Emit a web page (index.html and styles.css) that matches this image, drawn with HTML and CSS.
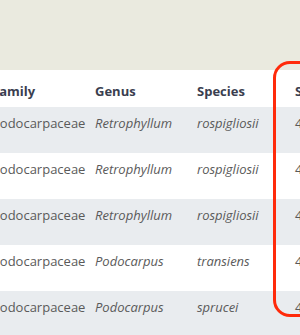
FILE: index.html
```html
<!DOCTYPE html>
<html lang="en">
<head>
<meta charset="utf-8">
<title>Specimen records</title>
<link rel="stylesheet" href="styles.css">
</head>
<body>
  <div class="banner"></div>
  <table class="records">
    <colgroup>
      <col class="c-family">
      <col class="c-genus">
      <col class="c-species">
      <col class="c-count">
    </colgroup>
    <thead>
      <tr>
        <th>Family</th>
        <th>Genus</th>
        <th>Species</th>
        <th>Specimens</th>
      </tr>
    </thead>
    <tbody>
      <tr>
        <td>Podocarpaceae</td>
        <td class="taxon">Retrophyllum</td>
        <td class="taxon">rospigliosii</td>
        <td>4</td>
      </tr>
      <tr>
        <td>Podocarpaceae</td>
        <td class="taxon">Retrophyllum</td>
        <td class="taxon">rospigliosii</td>
        <td>4</td>
      </tr>
      <tr>
        <td>Podocarpaceae</td>
        <td class="taxon">Retrophyllum</td>
        <td class="taxon">rospigliosii</td>
        <td>4</td>
      </tr>
      <tr>
        <td>Podocarpaceae</td>
        <td class="taxon">Podocarpus</td>
        <td class="taxon">transiens</td>
        <td>4</td>
      </tr>
      <tr>
        <td>Podocarpaceae</td>
        <td class="taxon">Podocarpus</td>
        <td class="taxon">sprucei</td>
        <td>4</td>
      </tr>
    </tbody>
  </table>
  <div class="callout"></div>
</body>
</html>
```

FILE: styles.css
```css
html, body {
  margin: 0;
  padding: 0;
  overflow: hidden;
}

body {
  position: relative;
  width: 300px;
  height: 335px;
  background: #eaeadf;
  font-family: "Open Sans", "Noto Sans", sans-serif;
  font-size: 13px;
}

.banner {
  height: 70px;
}

.records {
  margin-left: -16px;
  border-collapse: collapse;
  table-layout: fixed;
  width: 403px;
  background: #ffffff;
}

.c-family { width: 103px; }
.c-genus { width: 102px; }
.c-species { width: 98px; }
.c-count { width: 100px; }

.records th {
  text-align: left;
  font-weight: 700;
  color: #3a3e4f;
  line-height: 18px;
  padding: 12px 8px 7px;
  white-space: nowrap;
}

.records td {
  color: #5a5a5a;
  line-height: 18px;
  padding: 7px 8px 21px;
  vertical-align: top;
  white-space: nowrap;
}

.records tbody tr:nth-child(odd) {
  background: #e9ecef;
}

.records .taxon {
  font-style: italic;
}

/* highlight ring around the specimen count column */
.callout {
  position: absolute;
  left: 273px;
  top: 61px;
  width: 100px;
  height: 250px;
  border: 3px solid #ff2a0a;
  border-radius: 17px;
}
```
